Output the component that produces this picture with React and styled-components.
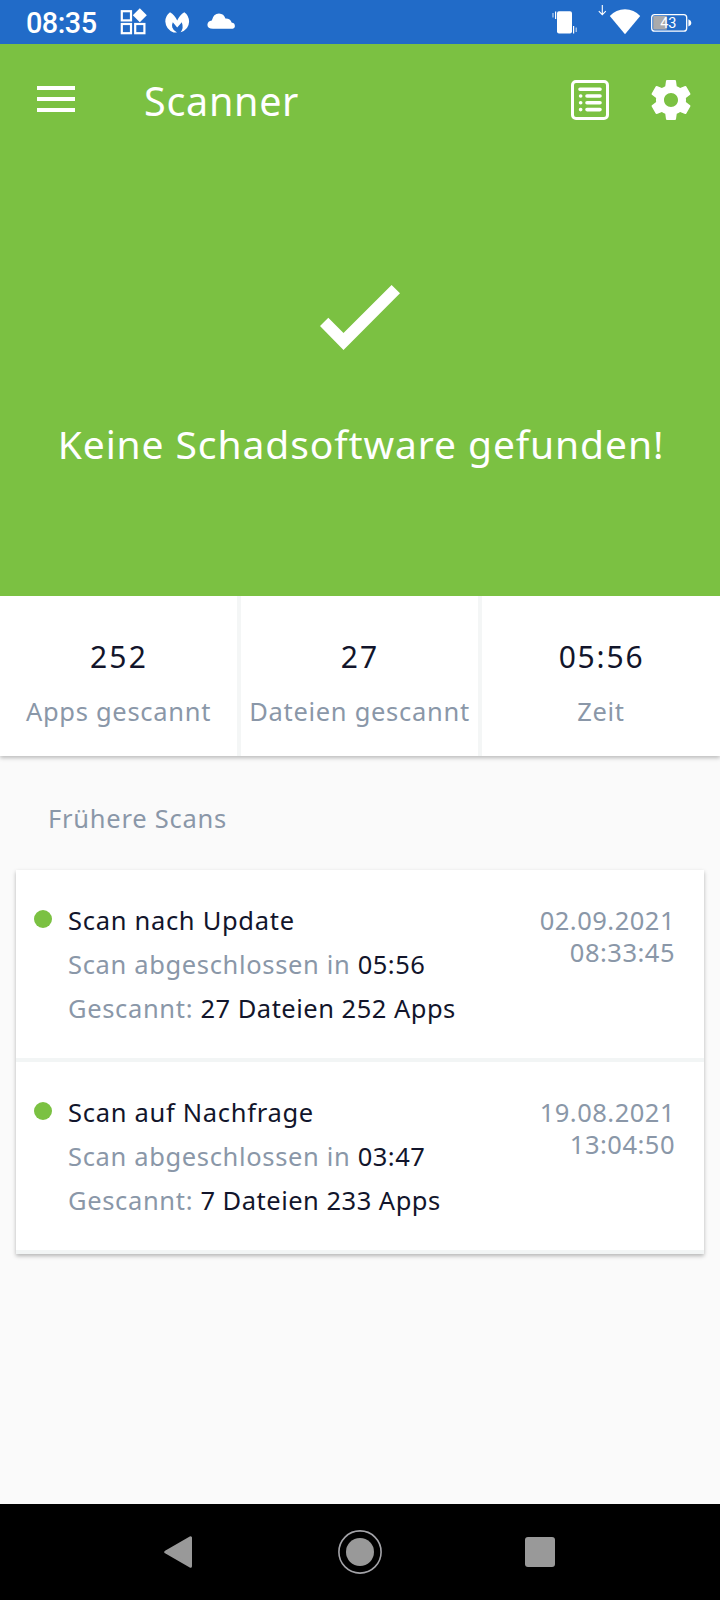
import React from 'react';
import styled, { createGlobalStyle } from 'styled-components';

const GlobalStyle = createGlobalStyle`
  * {
    box-sizing: border-box;
  }
  body {
    margin: 0;
    background-color: #fafafa;
  }
  svg {
    display: block;
    flex-shrink: 0;
  }
`
const Screen = styled.div`
  width: 720px;
  height: 1600px;
  display: flex;
  flex-direction: column;
  overflow: hidden;
  background-color: #fafafa;
  color: #12152b;
  font-family: 'Noto Sans', sans-serif;
  font-size: 25.5px;
  line-height: 32px;
  letter-spacing: 0.7px;
  white-space: nowrap;
`
const StatusBar = styled.div`
  height: 44px;
  flex-shrink: 0;
  display: flex;
  align-items: center;
  justify-content: space-between;
  padding-left: 26px;
  padding-right: 28px;
  background-color: #216bc8;
`
const StatusGroup = styled.div`
  display: flex;
  align-items: center;
`
const Clock = styled.span`
  width: 94px;
  font-family: Roboto, sans-serif;
  font-size: 28.8px;
  font-weight: 500;
  letter-spacing: -0.5px;
  line-height: 44px;
  padding-top: 2px;
  color: #fff;
`
const Hero = styled.section`
  height: 552px;
  flex-shrink: 0;
  background-color: #7bc142;
  color: #fff;
`
const AppBar = styled.header`
  height: 112px;
  display: flex;
  align-items: center;
  padding-left: 37px;
  padding-right: 25px;
`
const Title = styled.h1`
  flex: 1;
  margin: 0;
  padding-top: 1px;
  padding-left: 69px;
  font-size: 39.5px;
  font-weight: 400;
  letter-spacing: 0.7px;
  line-height: 48px;
`
const IconGap = styled.div`
  width: 38px;
`
const Result = styled.div`
  display: flex;
  flex-direction: column;
  align-items: center;
  padding-top: 129px;
`
const Message = styled.p`
  margin: 70px 0 0 2px;
  font-size: 39px;
  letter-spacing: 0.9px;
  line-height: 48px;
`
const Stats = styled.section`
  height: 160px;
  flex-shrink: 0;
  display: grid;
  grid-template-columns: 237px 237px 238px;
  column-gap: 4px;
  background-color: #f4f6f6;
  box-shadow: 0 2px 4px rgba(0, 0, 0, 0.25);
  clip-path: inset(0 0 -10px 0);
`
const Stat = styled.div`
  display: flex;
  flex-direction: column;
  align-items: center;
  padding-top: 41px;
  background-color: #fff;
`
const StatValue = styled.div`
  height: 40px;
  line-height: 40px;
  font-size: 30px;
  letter-spacing: ${(props) => props.$spacing};
  margin-right: -1px;
`
const StatLabel = styled.div`
  margin-top: 18px;
  line-height: 32px;
  color: #8a97a8;
`
const SectionTitle = styled.h2`
  margin: 46px 0 36px 48px;
  font-size: 25.5px;
  font-weight: 400;
  letter-spacing: 0.75px;
  color: #8a97a8;
`
const ScanList = styled.ul`
  list-style: none;
  width: 688px;
  margin: 0 16px;
  padding: 0;
  background-color: #fff;
  box-shadow: 0 2px 4px rgba(0, 0, 0, 0.28);
`
const ScanItem = styled.li`
  height: 192px;
  display: flex;
  align-items: flex-start;
  padding: 34px 29px 0 18px;
  border-bottom: 4px solid #f2f5f5;
`
const Dot = styled.span`
  width: 18px;
  height: 18px;
  margin-top: 6px;
  border-radius: 50%;
  background-color: #7bc142;
`
const ScanInfo = styled.div`
  flex: 1;
  display: flex;
  flex-direction: column;
  gap: 12px;
  padding-left: 16px;
`
const Line = styled.div`
  height: 32px;
  line-height: 32px;
`
const Muted = styled.span`
  color: #8a97a8;
  letter-spacing: 0.65px;
`
const Value = styled.span`
  letter-spacing: 0.5px;
`
const ScanDate = styled.div`
  text-align: right;
  color: #8a97a8;
  letter-spacing: 0.5px;
`
const NavBar = styled.nav`
  height: 96px;
  flex-shrink: 0;
  margin-top: auto;
  display: flex;
  align-items: center;
  padding-left: 164px;
  background-color: #000;
`
const NavButton = styled.div`
  margin-right: ${(props) => props.$gap || '0'};
`

const scans = [
  {
    name: 'Scan nach Update',
    duration: '05:56',
    scanned: '27 Dateien 252 Apps',
    date: '02.09.2021',
    time: '08:33:45',
  },
  {
    name: 'Scan auf Nachfrage',
    duration: '03:47',
    scanned: '7 Dateien 233 Apps',
    date: '19.08.2021',
    time: '13:04:50',
  },
]

// notification icons: widgets, malwarebytes, cloud
const NotificationIcons = () => (
  <svg width="116" height="44" viewBox="120 0 116 44" fill="#fff">
    <g fill="none" stroke="#fff" strokeWidth="2.2">
      <rect x="121.8" y="11.2" width="9.2" height="9.2" />
      <rect x="121.8" y="24" width="9.2" height="9.2" />
      <rect x="135.2" y="24" width="9.2" height="9.2" />
    </g>
    <path d="M139.8 8.2 L146.8 15.2 L139.8 22.2 L132.8 15.2 Z" />
    <path d="M170 12.2 Q165.2 15.8 165.3 21.6 Q165.9 29.8 173.6 32.4 Q175.6 32.8 177 32.4 Q173.4 31 172.3 27.6 Q171.6 24.6 172.8 22.2 L177.2 27.6 L181.8 22.2 Q184 28.4 180.6 32.2 Q188.8 29.8 189.1 21.8 Q189.1 15.6 184.3 12.2 Q179.6 15 177.2 20.6 Q174.8 15 170 12.2 Z" />
    <path d="M213 28.8 Q207.4 28.6 207.4 24.8 Q207.8 20.7 211.8 20.4 Q213.4 13.4 219 13.4 Q224 13.6 225.4 18.4 Q230.4 18.2 231.6 22.6 Q234.9 23 234.9 26.2 Q234.6 28.8 231 28.8 Z" />
  </svg>
)

const VibrateIcon = () => (
  <svg width="26" height="44" viewBox="552 0 26 44" fill="#fff">
    <rect x="557" y="11.3" width="15" height="22.2" rx="2" />
    <path d="M555.6 11.5v7.5M573.6 26v7.5" stroke="#fff" strokeWidth="1.2" />
    <path d="M553 13v4.5M576.2 27.5v4.5" stroke="#fff" strokeWidth="1.2" opacity="0.7" />
  </svg>
)

const WifiIcon = () => (
  <svg width="43" height="44" viewBox="598 0 43 44" fill="#fff">
    <path d="M602.3 5v9.3M598.8 11.2l3.5 3.5 3.5-3.5" fill="none" stroke="#fff" strokeWidth="1.1" />
    <path d="M609.8 16 Q616 9.2 625 9.2 Q634 9.2 640.2 16 L625 34.2 Z" />
  </svg>
)

const BatteryIcon = () => (
  <svg width="41" height="44" viewBox="651 0 41 44">
    <rect x="653.2" y="16" width="13.6" height="13.6" fill="#a9aaac" />
    <rect x="651.7" y="14.6" width="35" height="16.6" rx="3" fill="none" stroke="#fff" strokeWidth="1.3" />
    <path d="M688.4 19.2q3 1.4 3 3.7t-3 3.7z" fill="#fff" />
    <text x="668.3" y="28" textAnchor="middle" fill="#fff" fontFamily="Roboto, sans-serif" fontSize="14.5" letterSpacing="0">43</text>
  </svg>
)

const MenuIcon = () => (
  <svg width="38" height="28" viewBox="0 0 38 28" fill="#fff">
    <rect width="38" height="4" />
    <rect y="11" width="38" height="4" />
    <rect y="22" width="38" height="4" />
  </svg>
)

const ReportIcon = () => (
  <svg width="38" height="40" viewBox="0 0 38 40">
    <rect x="1.5" y="1.5" width="35" height="37" rx="3.5" fill="none" stroke="#fff" strokeWidth="3" />
    <g stroke="#fff" strokeWidth="3.6" strokeLinecap="round">
      <path d="M9 9.2h20M16 16h13M16 22.8h13M16 29.6h13" />
      <path d="M9.6 16h0.1M9.6 22.8h0.1M9.6 29.6h0.1" />
    </g>
  </svg>
)

const GearIcon = () => (
  <svg width="48" height="48" viewBox="0 0 24 24" fill="#fff">
    <path d="M19.43 12.98c.04-.32.07-.64.07-.98s-.03-.66-.07-.98l2.11-1.65c.19-.15.24-.42.12-.64l-2-3.46c-.12-.22-.39-.3-.61-.22l-2.49 1c-.52-.4-1.08-.73-1.69-.98l-.38-2.65C14.46 2.18 14.25 2 14 2h-4c-.25 0-.46.18-.49.42l-.38 2.65c-.61.25-1.17.59-1.69.98l-2.49-1c-.23-.09-.49 0-.61.22l-2 3.46c-.13.22-.07.49.12.64l2.11 1.65c-.04.32-.07.65-.07.98s.03.66.07.98l-2.11 1.65c-.19.15-.24.42-.12.64l2 3.46c.12.22.39.3.61.22l2.49-1c.52.4 1.08.73 1.69.98l.38 2.65c.03.24.24.42.49.42h4c.25 0 .46-.18.49-.42l.38-2.65c.61-.25 1.17-.59 1.69-.98l2.49 1c.23.09.49 0 .61-.22l2-3.46c.12-.22.07-.49-.12-.64l-2.11-1.65zM12 15.5c-1.93 0-3.5-1.57-3.5-3.5s1.57-3.5 3.5-3.5 3.5 1.57 3.5 3.5-1.57 3.5-3.5 3.5z" />
  </svg>
)

const CheckIcon = () => (
  <svg width="80" height="65" viewBox="0 0 80 65" fill="#fff">
    <path d="M0 41 L8.3 32.8 L23.5 48 L71.6 0 L80 8.3 L23.5 65 Z" />
  </svg>
)

const BackIcon = () => (
  <svg width="28" height="32" viewBox="0 0 28 32" fill="#999" stroke="#999" strokeWidth="3" strokeLinejoin="round">
    <path d="M26.5 1.8v28.4L1.8 16z" />
  </svg>
)

const HomeIcon = () => (
  <svg width="44" height="44" viewBox="0 0 44 44">
    <circle cx="22" cy="22" r="21.1" fill="none" stroke="#a3a3a8" strokeWidth="1.6" />
    <circle cx="22" cy="22" r="14" fill="#999" />
  </svg>
)

const RecentIcon = () => (
  <svg width="30" height="30" viewBox="0 0 30 30" fill="#999">
    <rect width="30" height="30" rx="3" />
  </svg>
)

const RightStatus = styled(StatusGroup)`
  svg + svg {
    margin-left: 10px;
  }
  svg:nth-child(2) {
    margin-left: 20px;
  }
`

class App extends React.Component {
  render() {
    return (
      <Screen>
        <GlobalStyle />
        <StatusBar>
          <StatusGroup>
            <Clock>08:35</Clock>
            <NotificationIcons />
          </StatusGroup>
          <RightStatus>
            <VibrateIcon />
            <WifiIcon />
            <BatteryIcon />
          </RightStatus>
        </StatusBar>

        <Hero>
          <AppBar>
            <MenuIcon />
            <Title>Scanner</Title>
            <ReportIcon />
            <IconGap />
            <GearIcon />
          </AppBar>
          <Result>
            <CheckIcon />
            <Message>Keine Schadsoftware gefunden!</Message>
          </Result>
        </Hero>

        <Stats>
          <Stat>
            <StatValue $spacing="2.2px">252</StatValue>
            <StatLabel>Apps gescannt</StatLabel>
          </Stat>
          <Stat>
            <StatValue $spacing="2.2px">27</StatValue>
            <StatLabel>Dateien gescannt</StatLabel>
          </Stat>
          <Stat>
            <StatValue $spacing="1.8px">05:56</StatValue>
            <StatLabel>Zeit</StatLabel>
          </Stat>
        </Stats>

        <SectionTitle>Frühere Scans</SectionTitle>
        <ScanList>
          {scans.map((scan) => (
            <ScanItem key={scan.date}>
              <Dot />
              <ScanInfo>
                <Line>{scan.name}</Line>
                <Line>
                  <Muted>Scan abgeschlossen in </Muted>
                  <Value>{scan.duration}</Value>
                </Line>
                <Line>
                  <Muted>Gescannt: </Muted>
                  <Value>{scan.scanned}</Value>
                </Line>
              </ScanInfo>
              <ScanDate>
                <div>{scan.date}</div>
                <div>{scan.time}</div>
              </ScanDate>
            </ScanItem>
          ))}
        </ScanList>

        <NavBar>
          <NavButton $gap="146px">
            <BackIcon />
          </NavButton>
          <NavButton $gap="143px">
            <HomeIcon />
          </NavButton>
          <NavButton>
            <RecentIcon />
          </NavButton>
        </NavBar>
      </Screen>
    )
  }
}

export default App;
